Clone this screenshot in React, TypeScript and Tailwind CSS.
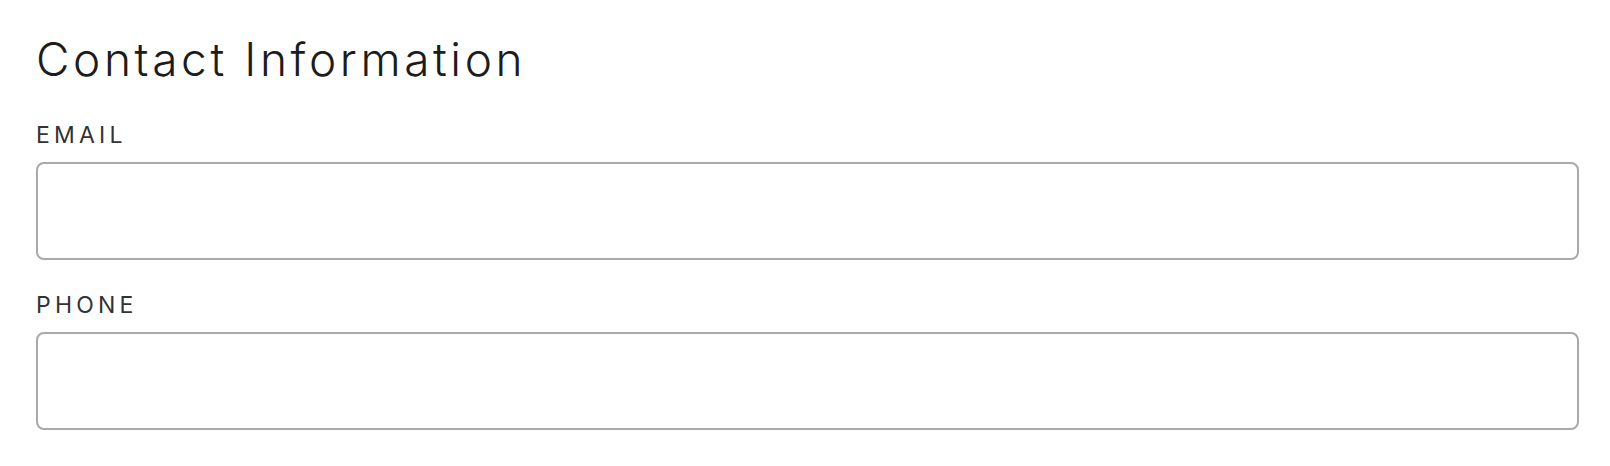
export default function App() {
  return (
    <div className="min-h-screen bg-white pl-9 pr-[31px] pt-[35px] font-['Inter',sans-serif]">
      <h1 className="text-[46px] leading-[48px] font-[360] text-[#1c1c1c] tracking-[3.6px]">
        Contact Information
      </h1>
      <div className="mt-[40px]">
        <label className="block text-[23px] leading-6 text-[#333] tracking-[4.2px]">EMAIL</label>
        <input
          type="email"
          className="mt-[15px] block w-full h-[98px] rounded-lg border-2 border-[#a9a9a9] bg-white"
        />
      </div>
      <div className="mt-[33px]">
        <label className="block text-[23px] leading-6 text-[#333] tracking-[4.2px]">PHONE</label>
        <input
          type="tel"
          className="mt-[15px] block w-full h-[98px] rounded-lg border-2 border-[#a9a9a9] bg-white"
        />
      </div>
    </div>
  );
}
